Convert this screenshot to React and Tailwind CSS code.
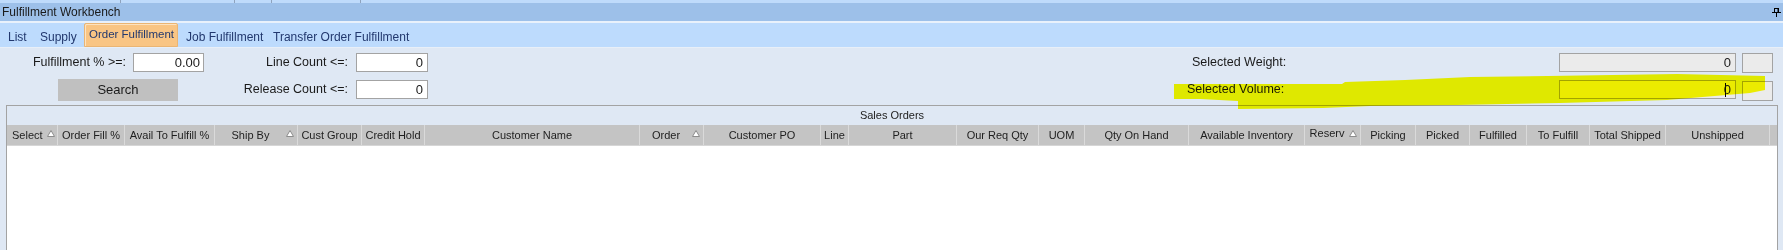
import React from "react";

const columns = [
  { label: "Select", w: 51, sort: true, left: true },
  { label: "Order Fill %", w: 67 },
  { label: "Avail To Fulfill %", w: 90 },
  { label: "Ship By", w: 83, sort: true },
  { label: "Cust Group", w: 64 },
  { label: "Credit Hold", w: 63 },
  { label: "Customer Name", w: 215 },
  { label: "Order", w: 64, sort: true },
  { label: "Customer PO", w: 117 },
  { label: "Line", w: 28 },
  { label: "Part", w: 108 },
  { label: "Our Req Qty", w: 82 },
  { label: "UOM", w: 46 },
  { label: "Qty On Hand", w: 104 },
  { label: "Available Inventory", w: 116 },
  { label: "Reserv", w: 56, sort: true, raised: true },
  { label: "Picking", w: 55 },
  { label: "Picked", w: 54 },
  { label: "Fulfilled", w: 57 },
  { label: "To Fulfill", w: 63 },
  { label: "Total Shipped", w: 76 },
  { label: "Unshipped", w: 104 },
];

const SortIcon = () => (
  <svg width="8" height="7" viewBox="0 0 8 7" className="shrink-0">
    <polygon points="0.5,6.5 4,0.5 7.5,6.5" fill="#ffffff" stroke="#8c8c8c" strokeWidth="1" />
  </svg>
);

const PinIcon = () => (
  <svg width="9" height="9" viewBox="0 0 9 9">
    <path d="M2 0.5h5 M2.5 0.5v4 M6 0.5v4 M6.5 0.5v4 M0 4.5h9 M4.5 4.5v4.5" stroke="#000" strokeWidth="1" fill="none" />
  </svg>
);

const HeaderCell = ({ col }) => {
  if (col.left) {
    return (
      <div
        style={{ width: col.w }}
        className="h-full shrink-0 flex items-center justify-between pl-[5px] pr-[2px] border-r border-[#dadada]"
      >
        <span>{col.label}</span>
        <span className="-mt-[4px]">
          <SortIcon />
        </span>
      </div>
    );
  }
  return (
    <div
      style={{ width: col.w }}
      className="h-full shrink-0 flex items-center border-r border-[#dadada] overflow-hidden whitespace-nowrap"
    >
      <span className={`flex-1 text-center ${col.raised ? "-mt-[4px]" : ""}`}>{col.label}</span>
      {col.sort && (
        <span className="pr-[3px] -mt-[4px]">
          <SortIcon />
        </span>
      )}
    </div>
  );
};

export default function App() {
  return (
    <div className="relative isolate w-[1783px] h-[250px] overflow-hidden bg-[#dfe8f4] font-['Liberation_Sans',Arial,sans-serif] text-[#1a1a1a]">
      {/* top strip of parent tabs */}
      <div className="h-[3px] bg-[#bfdbfb] flex">
        <div className="w-[121px] border-r border-[#8fa3bd]" />
        <div className="w-[114px] border-r border-[#8fa3bd]" />
        <div className="w-[37px] border-r border-[#8fa3bd]" />
        <div className="w-[89px] border-r border-[#8fa3bd]" />
      </div>

      {/* title bar */}
      <div className="h-[18px] bg-[#9dc0e9] flex items-center justify-between pl-[2px] pr-[2px]">
        <span className="text-[12px] leading-none">Fulfillment Workbench</span>
        <PinIcon />
      </div>
      <div className="h-[2px] bg-[#e9f1fb]" />

      {/* tabs */}
      <div className="h-[24px] bg-[#bddbfd] flex pl-[8px] text-[12px] text-[#22386e] whitespace-nowrap">
        <div className="w-[32px] pt-[5px]">List</div>
        <div className="w-[44px] pt-[5px]">Supply</div>
        <div className="w-[94px] flex items-center pl-[4px] bg-[#f9c584] border border-[#eab574] rounded-t-[2px] shadow-[inset_1px_1px_0_#fde3c0] overflow-hidden text-[11.5px]">
          Order Fulfillment
        </div>
        <div className="w-[95px] pl-[8px] pt-[5px]">Job Fulfillment</div>
        <div className="pt-[5px]">Transfer Order Fulfillment</div>
      </div>
      <div className="h-[1px] bg-[#e8eff8]" />

      {/* filter row 1 */}
      <div className="flex items-start mt-[5px] h-[20px] text-[12.5px]">
        <div className="w-[126px] h-[19px] flex items-center justify-end">Fulfillment % &gt;=:</div>
        <div className="ml-[7px] w-[71px] h-[19px] bg-white border border-[#a3a3a3] flex items-center justify-end pr-[3px] text-[13px]">
          0.00
        </div>
        <div className="w-[144px] h-[19px] flex items-center justify-end">Line Count &lt;=:</div>
        <div className="ml-[8px] w-[72px] h-[19px] bg-white border border-[#a3a3a3] flex items-center justify-end pr-[4px] text-[13px]">
          0
        </div>
        <div className="ml-auto flex items-start pr-[10px]">
          <div className="w-[367px] h-[19px] flex items-center">Selected Weight:</div>
          <div className="w-[177px] h-[19px] bg-[#ebebeb] border border-[#a3a3a3] flex items-center justify-end pr-[4px] text-[13px]">
            0
          </div>
          <div className="ml-[6px] w-[31px] h-[20px] bg-[#ebebeb] border border-[#a3a3a3]" />
        </div>
      </div>

      {/* filter row 2 */}
      <div className="flex items-start mt-[6px] h-[22px] text-[12.5px]">
        <div className="ml-[58px] w-[120px] h-[22px] bg-[#c0c0c0] flex items-center justify-center text-[13px]">
          Search
        </div>
        <div className="w-[170px] h-[19px] mt-[1px] flex items-center justify-end">Release Count &lt;=:</div>
        <div className="ml-[8px] mt-[1px] w-[72px] h-[19px] bg-white border border-[#a3a3a3] flex items-center justify-end pr-[4px] text-[13px]">
          0
        </div>
        <div className="ml-auto flex items-start pr-[10px]">
          <div className="w-[372px] mt-[1px] h-[19px] flex items-center">Selected Volume:</div>
          <div className="mt-[1px] w-[177px] h-[19px] bg-[#ebebeb] border border-[#a3a3a3] flex items-center justify-end pr-[4px] text-[13px]">
            <span className="w-[1px] h-[14px] bg-black mr-[-2px]" />
            0
          </div>
          <div className="ml-[6px] mt-[2px] w-[31px] h-[20px] bg-[#ebebeb] border border-[#a3a3a3]" />
        </div>
      </div>

      {/* sales orders grid */}
      <div className="ml-[6px] mt-[4px] w-[1772px] h-[200px] border border-[#a3a3a3] flex flex-col text-[11px]">
        <div className="h-[19px] flex items-center justify-center text-[#222]">Sales Orders</div>
        <div className="h-[21px] flex bg-[#c4c4c4] border-b border-[#d6d6d6] text-[#1e1e1e]">
          {columns.map((col) => (
            <HeaderCell key={col.label} col={col} />
          ))}
          <div className="flex-1" />
        </div>
        <div className="flex-1 bg-white" />
      </div>

      {/* marker highlight drawn over the form */}
      <svg
        width="1783"
        height="250"
        className="absolute left-0 top-0 pointer-events-none mix-blend-multiply"
      >
        <polygon
          points="1174,84 1342,84 1345,82 1405,80 1470,77 1548,76 1677,74 1765,76 1765,90 1750,93 1667,100 1560,103 1457,105 1370,106 1323,108 1238,109 1238,101 1200,99 1174,99"
          fill="#ffff00"
        />
      </svg>
    </div>
  );
}
